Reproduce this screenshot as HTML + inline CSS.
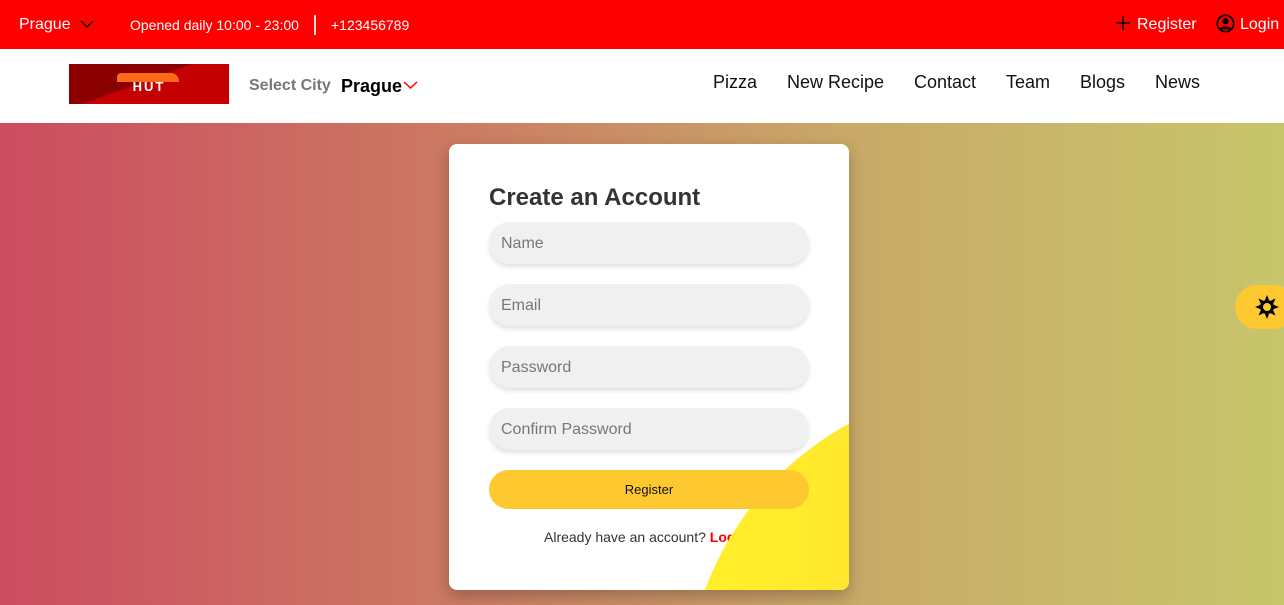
<!DOCTYPE html>
<html style="overflow:hidden"><head><meta charset="utf-8"><style>
*{margin:0;padding:0;box-sizing:border-box}
html,body{width:1284px;height:605px;overflow:hidden}
body{font-family:"Liberation Sans",sans-serif;position:relative;background:linear-gradient(90deg,#cc4c60 0%,#cc7a63 35%,#c9a868 65%,#c7c66b 100%)}
.top{position:absolute;left:0;top:0;width:1284px;height:49px;background:#ff0000;color:#fff}
.top span{position:absolute;top:17px;font-size:14px}
.hdr{position:absolute;top:49px;left:0;width:1284px;height:74px;background:#fff}
.logo{position:absolute;left:69px;top:15px;width:160px;height:40px;background:linear-gradient(160deg,#8b0000 45%,#c40000 46%)}
.nav{position:absolute;top:23px;font-size:18px;color:#111}
.card{position:absolute;left:449px;top:144px;width:400px;height:446px;background:#fff;border-radius:8px;overflow:hidden;box-shadow:0 6px 16px rgba(0,0,0,.25)}
.circ{position:absolute;left:236px;top:241px;width:630px;height:630px;border-radius:50%;background:linear-gradient(90deg,#fff027,#ffd040);z-index:2}
h2{position:absolute;left:40px;top:40px;font-size:24px;color:#333;font-weight:bold}
.in{position:absolute;left:40px;width:320px;height:42px;border-radius:21px;background:#f0f0f0;box-shadow:0 3px 5px rgba(0,0,0,.12);color:#777;font-size:16px;padding:13px 12px 0}
.btn{position:absolute;left:40px;top:326px;width:320px;height:39px;border-radius:20px;background:#fec930;text-align:center;line-height:39px;font-size:13px;color:#111;z-index:3}
.al{position:absolute;left:95px;top:385px;font-size:14px;color:#333;z-index:1}
.sun{position:absolute;left:1235px;top:285px;width:60px;height:44px;border-radius:22px;background:#fec930}
</style></head><body>
<div class="top">
<span style="left:19px;top:16px;font-size:16px">Prague</span>
<svg style="position:absolute;left:80px;top:20px" width="14" height="9"><path d="M1 1l6 6 6-6" stroke="#000" fill="none" stroke-width="1.3"/></svg>
<span style="left:130px">Opened daily 10:00 - 23:00</span>
<div style="position:absolute;left:314px;top:15px;width:2px;height:20px;background:#ddd"></div>
<span style="left:331px">+123456789</span>
<svg style="position:absolute;left:1116px;top:16px" width="14" height="14"><path d="M7 0v14M0 7h14" stroke="#000" stroke-width="1.4"/></svg>
<span style="left:1137px;top:16px;font-size:16px">Register</span>
<svg style="position:absolute;left:1216px;top:14px" width="19" height="19" viewBox="0 0 20 20"><circle cx="10" cy="10" r="8.6" fill="none" stroke="#000" stroke-width="1.8"/><circle cx="10" cy="7.5" r="3.3" fill="#000"/><path d="M4 16c2-4 10-4 12 0" fill="#000"/></svg>
<span style="left:1240px;top:16px;font-size:16px">Login</span>
</div>
<div class="hdr">
<div class="logo"><div style="position:absolute;left:48px;top:9px;width:62px;height:9px;background:#ff6a1a;border-radius:4px 8px 0 0"></div><div style="position:absolute;left:48px;top:16px;width:64px;height:14px;color:#fff;font-weight:bold;font-size:13px;text-align:center;letter-spacing:2px;line-height:14px">HUT</div></div>
<span style="position:absolute;left:249px;top:28px;font-size:16px;font-weight:bold;color:#777">Select City</span>
<span style="position:absolute;left:341px;top:27px;font-size:18px;font-weight:bold;color:#000">Prague</span>
<svg style="position:absolute;left:403px;top:32px" width="15" height="9"><path d="M1 1l6.5 6 6.5-6" stroke="#f00" fill="none" stroke-width="1.5"/></svg>
<span class="nav" style="left:713px">Pizza</span>
<span class="nav" style="left:787px">New Recipe</span>
<span class="nav" style="left:914px">Contact</span>
<span class="nav" style="left:1006px">Team</span>
<span class="nav" style="left:1080px">Blogs</span>
<span class="nav" style="left:1155px">News</span>
</div>
<div class="card">
<div class="circ"></div>
<h2>Create an Account</h2>
<div class="in" style="top:78px">Name</div>
<div class="in" style="top:140px">Email</div>
<div class="in" style="top:202px">Password</div>
<div class="in" style="top:264px">Confirm Password</div>
<div class="btn">Register</div>
<div class="al">Already have an account? <b style="color:#f00">Login</b></div>
</div>
<div class="sun"><svg style="position:absolute;left:20px;top:10px" width="24" height="24" viewBox="0 0 24 24"><g fill="#000"><polygon points="12,0 14,5 10,5"/><polygon points="12,24 14,19 10,19"/><polygon points="0,12 5,10 5,14"/><polygon points="24,12 19,10 19,14"/><polygon points="3.5,3.5 8.5,5.7 5.7,8.5"/><polygon points="20.5,20.5 15.5,18.3 18.3,15.5"/><polygon points="20.5,3.5 18.3,8.5 15.5,5.7"/><polygon points="3.5,20.5 5.7,15.5 8.5,18.3"/><circle cx="12" cy="12" r="7"/></g><circle cx="12" cy="12" r="4" fill="#fec930"/></svg></div>
</body></html>
